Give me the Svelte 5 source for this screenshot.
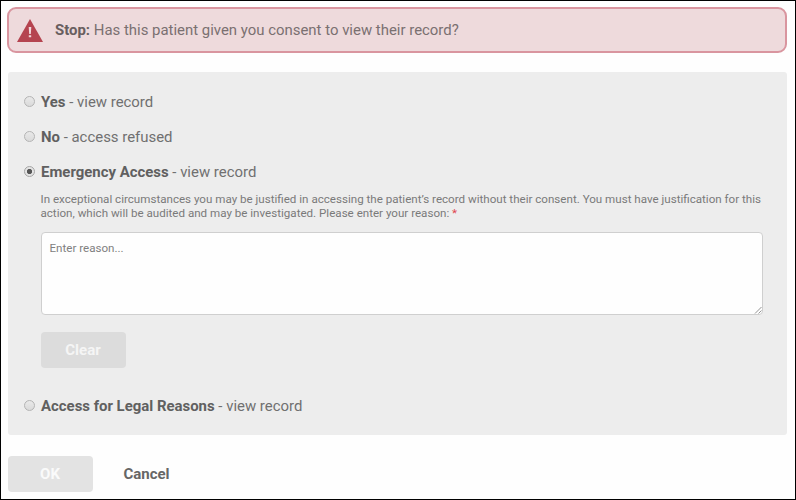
<script>
  let selected = $state('emergency');
  let reason = $state('');
</script>

{#snippet option(value, name, result)}
  <label class="option">
    <input type="radio" name="consent" {value} bind:group={selected} />
    <span><strong>{name}</strong> - {result}</span>
  </label>
{/snippet}

<main>
  <div class="alert" role="alert">
    <svg class="warning" viewBox="0 0 26 23" aria-hidden="true">
      <path d="M13 0 26 23H0Z" fill="#b54450" />
      <path d="M11.7 8h2.6l-.5 7h-1.6zM11.8 16.2h2.4v2h-2.4z" fill="#f0d8db" />
    </svg>
    <span class="question"><strong>Stop:</strong> Has this patient given you consent to view their record?</span>
  </div>

  <section class="panel">
    {@render option('yes', 'Yes', 'view record')}
    {@render option('no', 'No', 'access refused')}
    {@render option('emergency', 'Emergency Access', 'view record')}
    <div class="details">
      <p>
        In exceptional circumstances you may be justified in accessing the patient’s record without their consent. You must have justification for this<br />
        action, which will be audited and may be investigated. Please enter your reason: <b>*</b>
      </p>
      <div class="field">
        <textarea placeholder="Enter reason..." bind:value={reason}></textarea>
        <svg class="grip" viewBox="0 0 8 8" aria-hidden="true"><path d="M1 7.5 7.5 1M4.5 7.5l3-3" stroke="#888" stroke-width=".9" fill="none" /></svg>
      </div>
      <button class="clear" onclick={() => (reason = '')}>Clear</button>
    </div>
    {@render option('legal', 'Access for Legal Reasons', 'view record')}
  </section>

  <footer>
    <button class="ok">OK</button>
    <button class="cancel">Cancel</button>
  </footer>
</main>

<style>
  main {
    box-sizing: border-box;
    width: 796px;
    height: 500px;
    padding: 6px 8px 0 6px;
    border: 1px solid #000;
    background: #fefefe;
    color: #707070;
    font: 14.93px/20px Roboto, sans-serif;
    overflow: hidden;
  }
  strong {
    font-weight: 700;
    color: #606060;
  }
  .alert {
    box-sizing: border-box;
    height: 46px;
    display: flex;
    align-items: center;
    padding-left: 8px;
    border: 2px solid #d9959f;
    border-radius: 9px;
    background: #eedadc;
  }
  .alert strong {
    color: #685e5f;
  }
  .question {
    color: #7a7071;
    white-space: nowrap;
  }
  .warning {
    width: 26px;
    height: 23px;
    margin-right: 12px;
  }
  .panel {
    box-sizing: border-box;
    height: 363px;
    margin: 19px 0 0 1px;
    padding: 20px 24px 0 15.5px;
    border-radius: 3px;
    background: #ededed;
  }
  .option {
    display: flex;
    align-items: center;
    height: 20px;
    margin-bottom: 15px;
    white-space: nowrap;
  }
  input {
    appearance: none;
    box-sizing: border-box;
    width: 11px;
    height: 11px;
    margin: 0 6.5px 1px 0;
    border: 1px solid #b4b4b4;
    border-radius: 50%;
    background: linear-gradient(#e9e9e9, #dadada);
  }
  input:checked {
    background: radial-gradient(circle, #555 0 2.2px, #e4e4e4 3px);
    border-color: #a5a5a5;
  }
  .details {
    margin: -5px 0 28px 17px;
  }
  p {
    margin: 0 0 12px;
    font-size: 11.6px;
    line-height: 14px;
    white-space: nowrap;
    color: #7a7a7a;
  }
  b {
    color: #e0444f;
    font-weight: 400;
  }
  .field {
    position: relative;
    width: 722px;
    height: 83px;
  }
  textarea {
    display: block;
    box-sizing: border-box;
    width: 722px;
    height: 83px;
    padding: 8px;
    border: 1px solid #cfcfcf;
    border-radius: 4px;
    background: #fefefe;
    resize: none;
    font: 11.6px/14px Roboto, sans-serif;
    outline: none;
  }
  textarea::placeholder {
    color: #808080;
    opacity: 1;
  }
  .grip {
    position: absolute;
    right: 1px;
    bottom: 1px;
    width: 8px;
    height: 8px;
  }
  button {
    height: 36px;
    padding: 0;
    border: 0;
    border-radius: 4px;
    font: 700 15px/36px Roboto, sans-serif;
  }
  .clear {
    display: block;
    width: 85px;
    margin-top: 16.5px;
    background: #dcdcdc;
    color: #f5f5f5;
  }
  footer {
    display: flex;
    margin: 21px 0 0 .5px;
  }
  .ok {
    width: 85px;
    background: #e3e3e3;
    color: #fafafa;
  }
  .cancel {
    width: 108px;
    background: none;
    color: #666;
  }
</style>
